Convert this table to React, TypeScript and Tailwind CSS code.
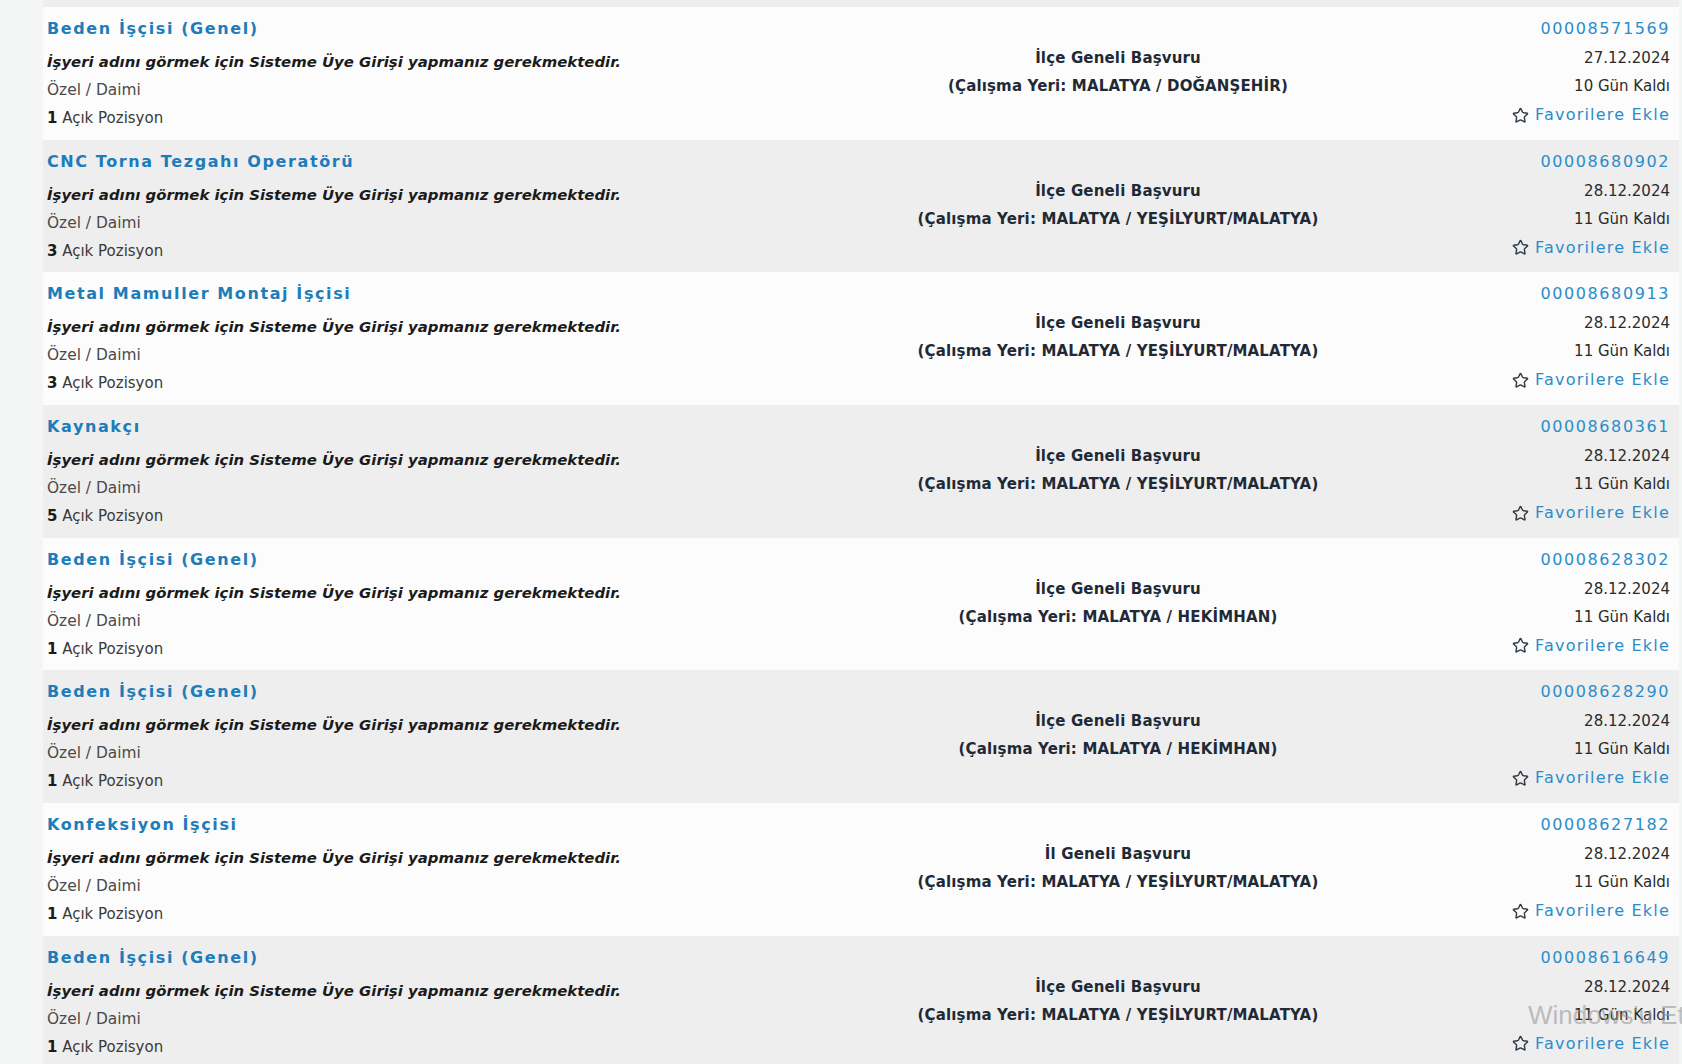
import { Star } from 'lucide-react';

type Ilan = {
  baslik: string;
  no: string;
  tarih: string;
  kalan: string;
  kapsam: string;
  yer: string;
  pozisyon: number;
};

const ilanlar: Ilan[] = [
  { baslik: 'Beden İşçisi (Genel)', no: '00008571569', tarih: '27.12.2024', kalan: '10 Gün Kaldı', kapsam: 'İlçe Geneli Başvuru', yer: 'MALATYA / DOĞANŞEHİR', pozisyon: 1 },
  { baslik: 'CNC Torna Tezgahı Operatörü', no: '00008680902', tarih: '28.12.2024', kalan: '11 Gün Kaldı', kapsam: 'İlçe Geneli Başvuru', yer: 'MALATYA / YEŞİLYURT/MALATYA', pozisyon: 3 },
  { baslik: 'Metal Mamuller Montaj İşçisi', no: '00008680913', tarih: '28.12.2024', kalan: '11 Gün Kaldı', kapsam: 'İlçe Geneli Başvuru', yer: 'MALATYA / YEŞİLYURT/MALATYA', pozisyon: 3 },
  { baslik: 'Kaynakçı', no: '00008680361', tarih: '28.12.2024', kalan: '11 Gün Kaldı', kapsam: 'İlçe Geneli Başvuru', yer: 'MALATYA / YEŞİLYURT/MALATYA', pozisyon: 5 },
  { baslik: 'Beden İşçisi (Genel)', no: '00008628302', tarih: '28.12.2024', kalan: '11 Gün Kaldı', kapsam: 'İlçe Geneli Başvuru', yer: 'MALATYA / HEKİMHAN', pozisyon: 1 },
  { baslik: 'Beden İşçisi (Genel)', no: '00008628290', tarih: '28.12.2024', kalan: '11 Gün Kaldı', kapsam: 'İlçe Geneli Başvuru', yer: 'MALATYA / HEKİMHAN', pozisyon: 1 },
  { baslik: 'Konfeksiyon İşçisi', no: '00008627182', tarih: '28.12.2024', kalan: '11 Gün Kaldı', kapsam: 'İl Geneli Başvuru', yer: 'MALATYA / YEŞİLYURT/MALATYA', pozisyon: 1 },
  { baslik: 'Beden İşçisi (Genel)', no: '00008616649', tarih: '28.12.2024', kalan: '11 Gün Kaldı', kapsam: 'İlçe Geneli Başvuru', yer: 'MALATYA / YEŞİLYURT/MALATYA', pozisyon: 1 },
];

function IlanSatiri({ ilan, gri }: { ilan: Ilan; gri: boolean }) {
  return (
    <div className={`flex h-[132.7px] shrink-0 ${gri ? 'bg-[#eeeeee]' : 'bg-[#fcfcfc]'}`}>
      <div className="w-[717px] pl-[4px] pt-[8px]">
        <a href="#" className="block text-[16px] leading-[28px] font-bold tracking-[1.6px] text-[#1c7dba]">
          {ilan.baslik}
        </a>
        <div className="mt-[5px] text-[14.9px] leading-[28px] font-bold italic text-[#1b1b1b]">
          İşyeri adını görmek için Sisteme Üye Girişi yapmanız gerekmektedir.
        </div>
        <div className="text-[15.4px] leading-[28px] text-[#4a4a4a]">Özel / Daimi</div>
        <div className="text-[15px] leading-[28px] text-[#3a3a3a]">
          <span className="font-bold text-[#1b1b1b]">{ilan.pozisyon}</span> Açık Pozisyon
        </div>
      </div>
      <div className="w-[716px] pt-[37px] text-center text-[15px] leading-[28px] font-bold tracking-[0.15px] text-[#1f2a36]">
        <div>{ilan.kapsam}</div>
        <div>(Çalışma Yeri: {ilan.yer})</div>
      </div>
      <div className="flex-1 pr-[9px] pt-[8px] text-right">
        <a href="#" className="block text-[16px] leading-[28px] tracking-[1.6px] text-[#2a8dca]">{ilan.no}</a>
        <div className="mt-[1px] text-[15px] leading-[28px] text-[#2b2b2b]">{ilan.tarih}</div>
        <div className="text-[15px] leading-[28px] text-[#2b2b2b]">{ilan.kalan}</div>
        <a href="#" className="mt-[1px] flex items-center justify-end gap-[6px] text-[16px] leading-[28px] tracking-[1.2px] text-[#2a8dca]">
          <Star size={17} strokeWidth={2} className="text-[#2f3a44]" />
          Favorilere Ekle
        </a>
      </div>
    </div>
  );
}

export default function App() {
  return (
    <div className="relative h-[1064px] w-full overflow-hidden bg-[#f4f5f5] font-['DejaVu_Sans',sans-serif]">
      <div className="ml-[43px] mr-[3px] flex flex-col">
        <div className="h-[7px] bg-[#eeeeee]" />
        {ilanlar.map((ilan, i) => (
          <IlanSatiri key={ilan.no} ilan={ilan} gri={i % 2 === 1} />
        ))}
      </div>
      <div className="pointer-events-none absolute left-[1528px] top-[996px] whitespace-nowrap font-['Liberation_Sans',sans-serif] text-[26px] text-[#9a9a9a] opacity-60">
        Windows'u Etkinleştir
      </div>
    </div>
  );
}
